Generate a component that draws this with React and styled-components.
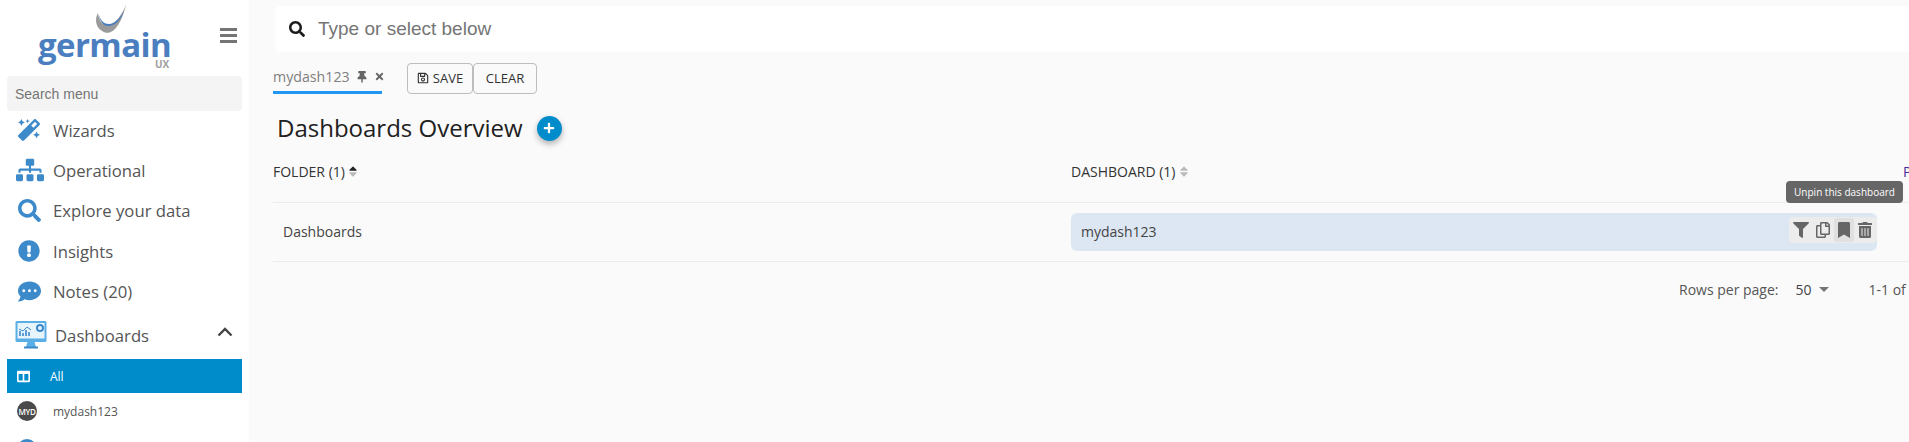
import React from "react";
import styled, { createGlobalStyle } from "styled-components";
import {
  FaMagic, FaSitemap, FaSearch, FaExclamationCircle, FaCommentDots, FaFilter, FaRegCopy,
  FaBookmark, FaTrashAlt, FaThumbtack, FaTimes, FaRegSave, FaPlus, FaColumns, FaSortUp, FaSortDown,
} from "react-icons/fa";

const Global = createGlobalStyle`
  html, body { margin: 0; padding: 0; height: 100%; overflow: hidden; background: #fafafa; }
  * { box-sizing: border-box; }
  body { font-family: "Open Sans", "Liberation Sans", sans-serif; }
`;

const Page = styled.div`
  display: flex; width: 1909px; height: 442px; overflow: hidden; background: #fafafa;
`;
const Sidebar = styled.aside`
  width: 249px; flex: none; background: #fff; padding: 0 7px; display: flex; flex-direction: column; overflow: hidden;
  & > * { flex: none; }
`;
const LogoRow = styled.div`
  height: 76px; display: flex; position: relative;
`;
const Logo = styled.div`
  position: relative; margin-left: 31px; width: 140px; height: 76px;
`;
const Swoosh = styled.svg`
  position: absolute; left: 55px; top: 4px;
`;
const LogoText = styled.div`
  position: absolute; left: 0; top: 25px; font: 700 33px/1.2 "Open Sans", sans-serif; letter-spacing: -0.6px; color: #4a7ebf;
`;
const LogoUx = styled.div`
  position: absolute; left: 117px; top: 59px; font: 700 10px/1 "Open Sans", sans-serif; color: #a0a0a0;
`;
const Burger = styled.div`
  position: absolute; left: 213px; top: 28px; width: 17px; display: flex; flex-direction: column; gap: 3px;
  span { display: block; height: 3px; background: #757575; }
`;
const SearchMenu = styled.div`
  height: 35px; background: #f4f4f4; border-radius: 4px; padding: 0 8px; display: flex; align-items: center;
  font: 14px "Liberation Sans", sans-serif; color: #757575;
`;
const MenuList = styled.nav`
  display: flex; flex-direction: column; margin-top: -1px;
`;
const MenuItem = styled.div`
  height: 40.3px; display: flex; align-items: center; color: #555; font-size: 16.7px; flex: none;
  svg { color: #3d8acb; }
`;
const IconSlot = styled.span`
  width: 46px; padding-left: ${(p) => p.$pad ?? 11}px; display: flex; align-items: center; flex: none;
`;
const DashRow = styled.div`
  height: 48px; display: flex; align-items: center; color: #555; font-size: 16.7px; padding-left: 8px;
`;
const DashLabel = styled.span`
  margin-left: 8px; flex: 1;
`;
const Chevron = styled.svg`
  margin: -6px 9px 0 0;
`;
const AllRow = styled.div`
  height: 34px; background: #008ccb; color: #fff; display: flex; align-items: center; font-size: 12px; padding-left: 10px;
`;
const AllLabel = styled.span`
  margin-left: 20px;
`;
const SubRow = styled.div`
  height: 36px; display: flex; align-items: center; font-size: 12px; color: #555; padding-left: 10px;
`;
const Avatar = styled.span`
  width: 20px; height: 20px; border-radius: 50%; background: ${(p) => p.$bg}; color: #fff; font-size: 8px; font-weight: 600;
  letter-spacing: -0.4px; display: flex; align-items: center; justify-content: center; flex: none;
`;
const SubLabel = styled.span`
  margin-left: 16px;
`;
const NextAvatar = styled(Avatar)`
  margin: 10px 0 0 10px;
`;

const Main = styled.main`
  flex: 1; min-width: 0; padding: 6px 0 0 24px; overflow: hidden;
`;
const SearchBar = styled.div`
  height: 46px; margin: 0 0 0 2px; background: #fff; border-radius: 6px 0 0 6px; display: flex; align-items: center; padding-left: 14px; gap: 13px;
  font: 19px "Liberation Sans", sans-serif; color: #757575;
  svg { color: #1c1c1c; }
`;
const TabRow = styled.div`
  display: flex; align-items: flex-start; margin-top: 11px; height: 31px;
`;
const Tab = styled.div`
  width: 109px; height: 31px; border-bottom: 3px solid #2196f3; display: flex; align-items: center; gap: 6px; font-size: 14.2px; color: #808080;
  padding-bottom: 1px; margin-right: 25px; white-space: nowrap;
`;
const TabIcons = styled.span`
  display: flex; align-items: center; gap: 6px; color: #666;
`;
const Btn = styled.button`
  height: 31px; width: ${(p) => p.$w}px; background: #fafafa; border: 1px solid #bdbdbd; border-radius: 4px; display: flex; align-items: center; justify-content: center;
  gap: 4px; padding: 0 0 2px; font: 13px "Open Sans", sans-serif; color: #333;
`;
const TitleRow = styled.div`
  display: flex; align-items: center; margin: 18px 0 0 4px; height: 32px;
`;
const Title = styled.h1`
  margin: 0; font-size: 24px; font-weight: 400; color: #212121; line-height: 32px;
`;
const AddBtn = styled.div`
  width: 25px; height: 25px; border-radius: 50%; background: #008ccb; color: #fff; display: flex; align-items: center; justify-content: center; margin-left: 14px;
  box-shadow: 0 3px 6px rgba(0,0,0,.3);
`;
const Table = styled.div`
  width: 1700px; margin-top: 9px;
`;
const HeadRow = styled.div`
  display: grid; grid-template-columns: 798px 832px 1fr; height: 50px; align-items: center; border-bottom: 1px solid #ececec; font-size: 14px; color: #333; padding-bottom: 12px;
`;
const HeadCell = styled.div`
  display: flex; align-items: center; gap: 3px; color: ${(p) => p.$c || "#333"};
`;
const SortIcon = styled.span`
  position: relative; width: 10px; height: 13px; display: inline-block;
  svg { position: absolute; left: 0; top: 0; width: 10px; height: 13px; }
`;
const BodyRow = styled.div`
  display: grid; grid-template-columns: 798px 806px 1fr; height: 59px; align-items: center; border-bottom: 1px solid #ececec; font-size: 14px; color: #444;
`;
const FolderCell = styled.div`
  padding: 0 0 2px 10px;
`;
const Pill = styled.div`
  position: relative; height: 38px; background: #dce7f3; border-radius: 6px; display: flex; align-items: center; padding: 0 0 2px 10px; font-size: 14px; color: #444;
`;
const Actions = styled.div`
  position: absolute; right: 0; top: 4px; height: 26px; width: 88px; background: #ececec; border-radius: 4px; display: flex; align-items: center; padding-left: 2px; color: #666;
`;
const Action = styled.span`
  width: ${(p) => p.$w}px; height: 24px; flex: none; display: flex; align-items: center; justify-content: center; border-radius: 3px; background: ${(p) => (p.$on ? "#e0e0e0" : "transparent")};
`;
const Tooltip = styled.div`
  position: absolute; right: -26px; top: -36px; height: 22px; width: 117px; background: #666; color: #fff; border-radius: 4px; font-size: 10px; display: flex; align-items: center; justify-content: center; white-space: nowrap;
`;
const Pager = styled.div`
  display: flex; align-items: center; height: 54px; padding-left: 1406px; font-size: 14px; color: #555; white-space: nowrap;
`;
const PageSel = styled.span`
  margin-left: 17px; display: flex; align-items: center; gap: 7px; color: #444;
`;
const Caret = styled.span`
  width: 0; height: 0; border-left: 5px solid transparent; border-right: 5px solid transparent; border-top: 5px solid #757575;
`;
const Range = styled.span`
  margin-left: 40px;
`;

function MonitorIcon() {
  return (
    <svg width="32" height="30" viewBox="0 0 32 30">
      <rect x="0.5" y="1" width="31" height="21" rx="1.5" fill="#5aaee6" />
      <rect x="2.5" y="3" width="27" height="15.5" fill="#e8f4fc" />
      <path d="M11 27h10l-1.5-5h-7z" fill="#5aaee6" />
      <rect x="9" y="26.5" width="14" height="2" fill="#3d8acb" />
      <path d="M5 16v-5M8 16v-3M11 16v-6M14 16v-4" stroke="#3d8acb" strokeWidth="1.6" />
      <path d="M4 9l4 2 4-4 4 3" stroke="#3d8acb" strokeWidth="1" fill="none" />
      <circle cx="25" cy="8" r="3" fill="none" stroke="#3d8acb" strokeWidth="2" />
    </svg>
  );
}

export default function App() {
  return (
    <Page>
      <Global />
      <Sidebar>
        <LogoRow>
          <Logo>
            <Swoosh width="34" height="30" viewBox="0 0 34 30">
              <path d="M5 9C1 16 3 25 12 28.5c9 2.5 17-10 21-28C29 11 22 21 14 21 9 21 6 16 5 9z" fill="#9a9a9a" />
              <path d="M6 11c2 6 5 9 10 9 6 0 11-6 15-13-3 9-9 15-16 15C10 22 7 17 6 11z" fill="#4a7ebf" />
            </Swoosh>
            <LogoText>germain</LogoText>
            <LogoUx>UX</LogoUx>
          </Logo>
          <Burger><span /><span /><span /></Burger>
        </LogoRow>
        <SearchMenu>Search menu</SearchMenu>
        <MenuList>
          <MenuItem><IconSlot><FaMagic size={22} /></IconSlot>Wizards</MenuItem>
          <MenuItem><IconSlot $pad={9}><FaSitemap size={28} /></IconSlot>Operational</MenuItem>
          <MenuItem><IconSlot><FaSearch size={23} /></IconSlot>Explore your data</MenuItem>
          <MenuItem><IconSlot><FaExclamationCircle size={22} /></IconSlot>Insights</MenuItem>
          <MenuItem><IconSlot><FaCommentDots size={23} /></IconSlot>Notes (20)</MenuItem>
        </MenuList>
        <DashRow>
          <MonitorIcon />
          <DashLabel>Dashboards</DashLabel>
          <Chevron width="16" height="10" viewBox="0 0 16 10"><path d="M1.5 8.5L8 2l6.5 6.5" fill="none" stroke="#444" strokeWidth="2.4" /></Chevron>
        </DashRow>
        <AllRow><FaColumns size={13} /><AllLabel>All</AllLabel></AllRow>
        <SubRow><Avatar $bg="#4a4a4a">MYD</Avatar><SubLabel>mydash123</SubLabel></SubRow>
        <NextAvatar $bg="#3d8acb" />
      </Sidebar>
      <Main>
        <SearchBar><FaSearch size={16} />Type or select below</SearchBar>
        <TabRow>
          <Tab>
            mydash123
            <TabIcons><FaThumbtack size={12} /><FaTimes size={11} /></TabIcons>
          </Tab>
          <Btn $w={66}><FaRegSave size={12} />SAVE</Btn>
          <Btn $w={64}>CLEAR</Btn>
        </TabRow>
        <TitleRow>
          <Title>Dashboards Overview</Title>
          <AddBtn><FaPlus size={12} /></AddBtn>
        </TitleRow>
        <Table>
          <HeadRow>
            <HeadCell>FOLDER (1)<SortIcon><FaSortUp color="#222" /><FaSortDown color="#bbb" /></SortIcon></HeadCell>
            <HeadCell>DASHBOARD (1)<SortIcon><FaSortUp color="#bbb" /><FaSortDown color="#bbb" /></SortIcon></HeadCell>
            <HeadCell $c="#4b2a9a">PINNED</HeadCell>
          </HeadRow>
          <BodyRow>
            <FolderCell>Dashboards</FolderCell>
            <Pill>
              mydash123
              <Actions>
                <Action $w={20}><FaFilter size={16} /></Action>
                <Action $w={23}><FaRegCopy size={16} /></Action>
                <Action $w={20} $on><FaBookmark size={16} /></Action>
                <Action $w={22}><FaTrashAlt size={16} /></Action>
                <Tooltip>Unpin this dashboard</Tooltip>
              </Actions>
            </Pill>
          </BodyRow>
          <Pager>
            Rows per page:
            <PageSel>50<Caret /></PageSel>
            <Range>1-1 of 1</Range>
          </Pager>
        </Table>
      </Main>
    </Page>
  );
}
